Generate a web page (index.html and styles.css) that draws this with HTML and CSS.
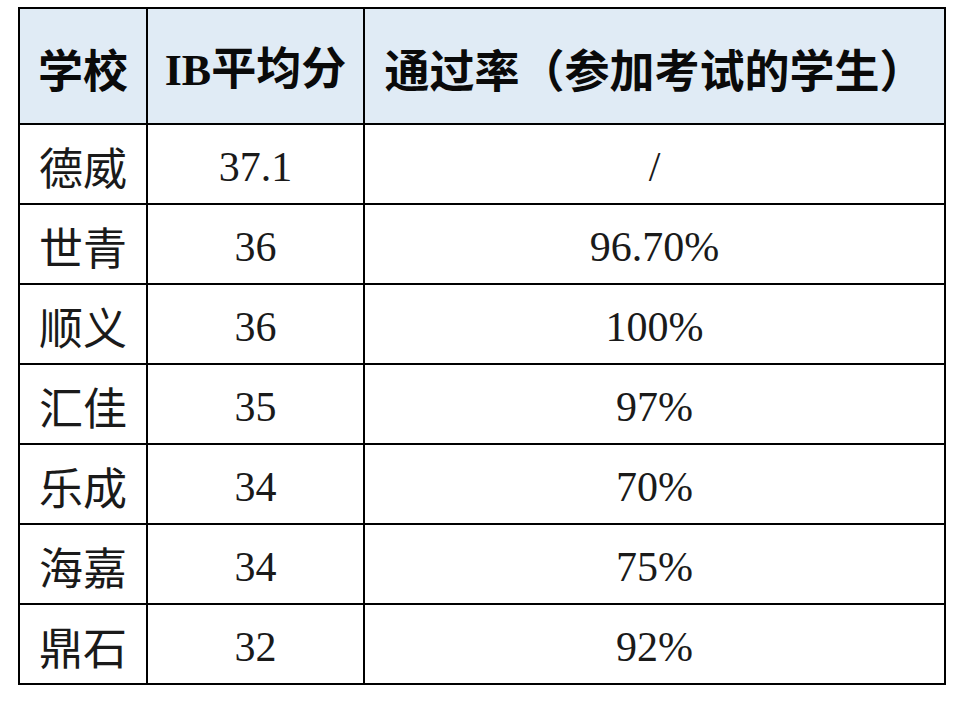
FILE: index.html
```html
<!DOCTYPE html>
<html lang="zh-CN">
<head>
<meta charset="utf-8">
<title>IB成绩</title>
<link rel="stylesheet" href="styles.css">
</head>
<body>
<table class="scores">
  <colgroup>
    <col class="c1">
    <col class="c2">
    <col class="c3">
  </colgroup>
  <thead>
    <tr class="head">
      <th>学校</th>
      <th><span class="lat">IB</span>平均分</th>
      <th>通过率（参加考试的学生）</th>
    </tr>
  </thead>
  <tbody>
    <tr><td class="name">德威</td><td class="num">37.1</td><td class="num">/</td></tr>
    <tr><td class="name">世青</td><td class="num">36</td><td class="num">96.70%</td></tr>
    <tr><td class="name">顺义</td><td class="num">36</td><td class="num">100%</td></tr>
    <tr><td class="name">汇佳</td><td class="num">35</td><td class="num">97%</td></tr>
    <tr><td class="name">乐成</td><td class="num">34</td><td class="num">70%</td></tr>
    <tr><td class="name">海嘉</td><td class="num">34</td><td class="num">75%</td></tr>
    <tr><td class="name">鼎石</td><td class="num">32</td><td class="num">92%</td></tr>
  </tbody>
</table>
</body>
</html>
```
FILE: styles.css
```css
html, body {
  margin: 0;
  padding: 0;
  background: #ffffff;
}
body {
  padding: 7px 0 0 18px;
  font-family: "Noto Sans CJK SC", sans-serif;
  color: #1a1a1a;
}
.scores {
  border-collapse: collapse;
  table-layout: fixed;
  width: 926px;
}
.c1 { width: 128px; }
.c2 { width: 217px; }
.c3 { width: 581px; }
.scores th,
.scores td {
  border: 2px solid #000000;
  padding: 0;
  text-align: center;
  vertical-align: middle;
  line-height: 1;
}
.scores th {
  height: 110px;
  background: #e0ebf5;
  font-weight: 700;
  font-size: 45px;
  color: #0a0a0a;
  padding-top: 4px;
}
.lat {
  font-family: "Liberation Serif", serif;
  font-weight: 700;
  font-size: 44px;
}
.scores td.name {
  height: 74px;
  font-size: 44px;
  font-weight: 400;
  padding-top: 4px;
}
.scores td.num {
  height: 72px;
  font-family: "Liberation Serif", serif;
  font-size: 42px;
  padding-top: 6px;
}
```
